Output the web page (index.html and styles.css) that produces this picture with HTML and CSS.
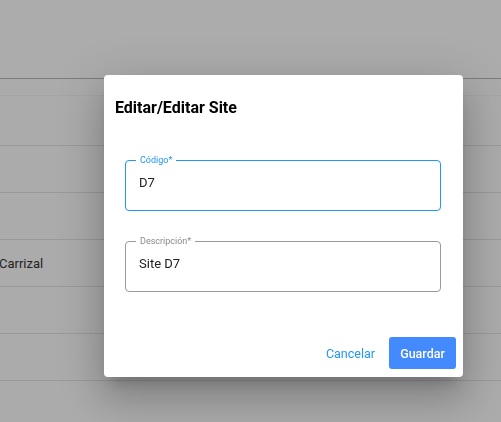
FILE: index.html
```html
<!DOCTYPE html>
<html lang="es">

<head>
    <meta charset="UTF-8">
    <meta name="viewport" content="width=device-width, initial-scale=1.0">
    <title>Sites</title>
    <link rel="stylesheet" href="styles.css">
</head>

<body>
    <div class="page">
        <div class="topbar"></div>
        <div class="thead"></div>
        <div class="rows">
            <div class="row"></div>
            <div class="row"></div>
            <div class="row"></div>
            <div class="row"><span class="cell">Carrizal</span></div>
            <div class="row"></div>
            <div class="row"></div>
        </div>
    </div>

    <!-- dialogo editar -->
    <div class="dialog">
        <h2 class="dialog-title">Editar/Editar Site</h2>
        <div class="dialog-body">
            <div class="field active">
                <label>Código*</label>
                <div class="value">D7</div>
            </div>
            <div class="field">
                <label>Descripción*</label>
                <div class="value">Site D7</div>
            </div>
        </div>
        <div class="dialog-actions">
            <button class="btn-text">Cancelar</button>
            <button class="btn-primary">Guardar</button>
        </div>
    </div>
</body>

</html>
```

FILE: styles.css
```css
body {
    margin: 0;
    padding: 0;
    background-color: #ababab;
    font-family: Roboto, "Liberation Sans", sans-serif;
    overflow: hidden;
}

.page {
    height: 422px;
}

.topbar {
    height: 78px;
    background-color: #acacac;
    border-bottom: 1px solid #7b7b7b;
}

.thead {
    height: 16px;
    border-bottom: 1px solid #a5a5a5;
    background-color: #ababab;
}

.row {
    height: 46px;
    border-bottom: 1px solid #999;
    display: flex;
    align-items: center;
    overflow: hidden;
}

.rows .row:first-child {
    height: 49px;
}

.cell {
    margin-left: -1px;
    font-size: 13px;
    color: #222;
}

.dialog {
    position: fixed;
    left: 104px;
    top: 75px;
    width: 359px;
    height: 302px;
    box-sizing: border-box;
    background-color: #fff;
    border-radius: 4px;
    box-shadow: 0 11px 15px -7px rgba(0, 0, 0, 0.2), 0 24px 38px 3px rgba(0, 0, 0, 0.14), 0 9px 46px 8px rgba(0, 0, 0, 0.12);
    display: flex;
    flex-direction: column;
    padding: 23px 7px 8px 11px;
}

.dialog-title {
    margin: 0;
    font-size: 16px;
    line-height: 20px;
    font-weight: 700;
    color: #000;
}

.dialog-body {
    padding: 42px 15px 0 10px;
}

.field {
    position: relative;
    height: 51px;
    box-sizing: border-box;
    border: 1px solid #9a9a9a;
    border-radius: 4px;
    margin-bottom: 30px;
}

.field.active {
    border-color: #2196f3;
}

.field label {
    position: absolute;
    left: 10px;
    top: -7px;
    padding: 0 4px;
    background-color: #fff;
    font-size: 9px;
    line-height: 12px;
    color: #8a8a8a;
}

.field.active label {
    color: #2196f3;
}

.field .value {
    padding: 13px 13px 0;
    font-size: 13px;
    line-height: 18px;
    color: #222;
}

.dialog-actions {
    margin-top: auto;
    display: flex;
    justify-content: flex-end;
    align-items: center;
    gap: 13px;
}

.dialog-actions button {
    font-family: Roboto, "Liberation Sans", sans-serif;
    font-size: 12.5px;
    border: none;
    cursor: pointer;
}

.btn-text {
    background: none;
    color: #2196f3;
    font-weight: 400;
    padding: 0 1px;
}

.btn-primary {
    width: 67px;
    height: 32px;
    background-color: #448aff;
    color: #fff;
    font-weight: 500;
    border-radius: 3px;
}
```
